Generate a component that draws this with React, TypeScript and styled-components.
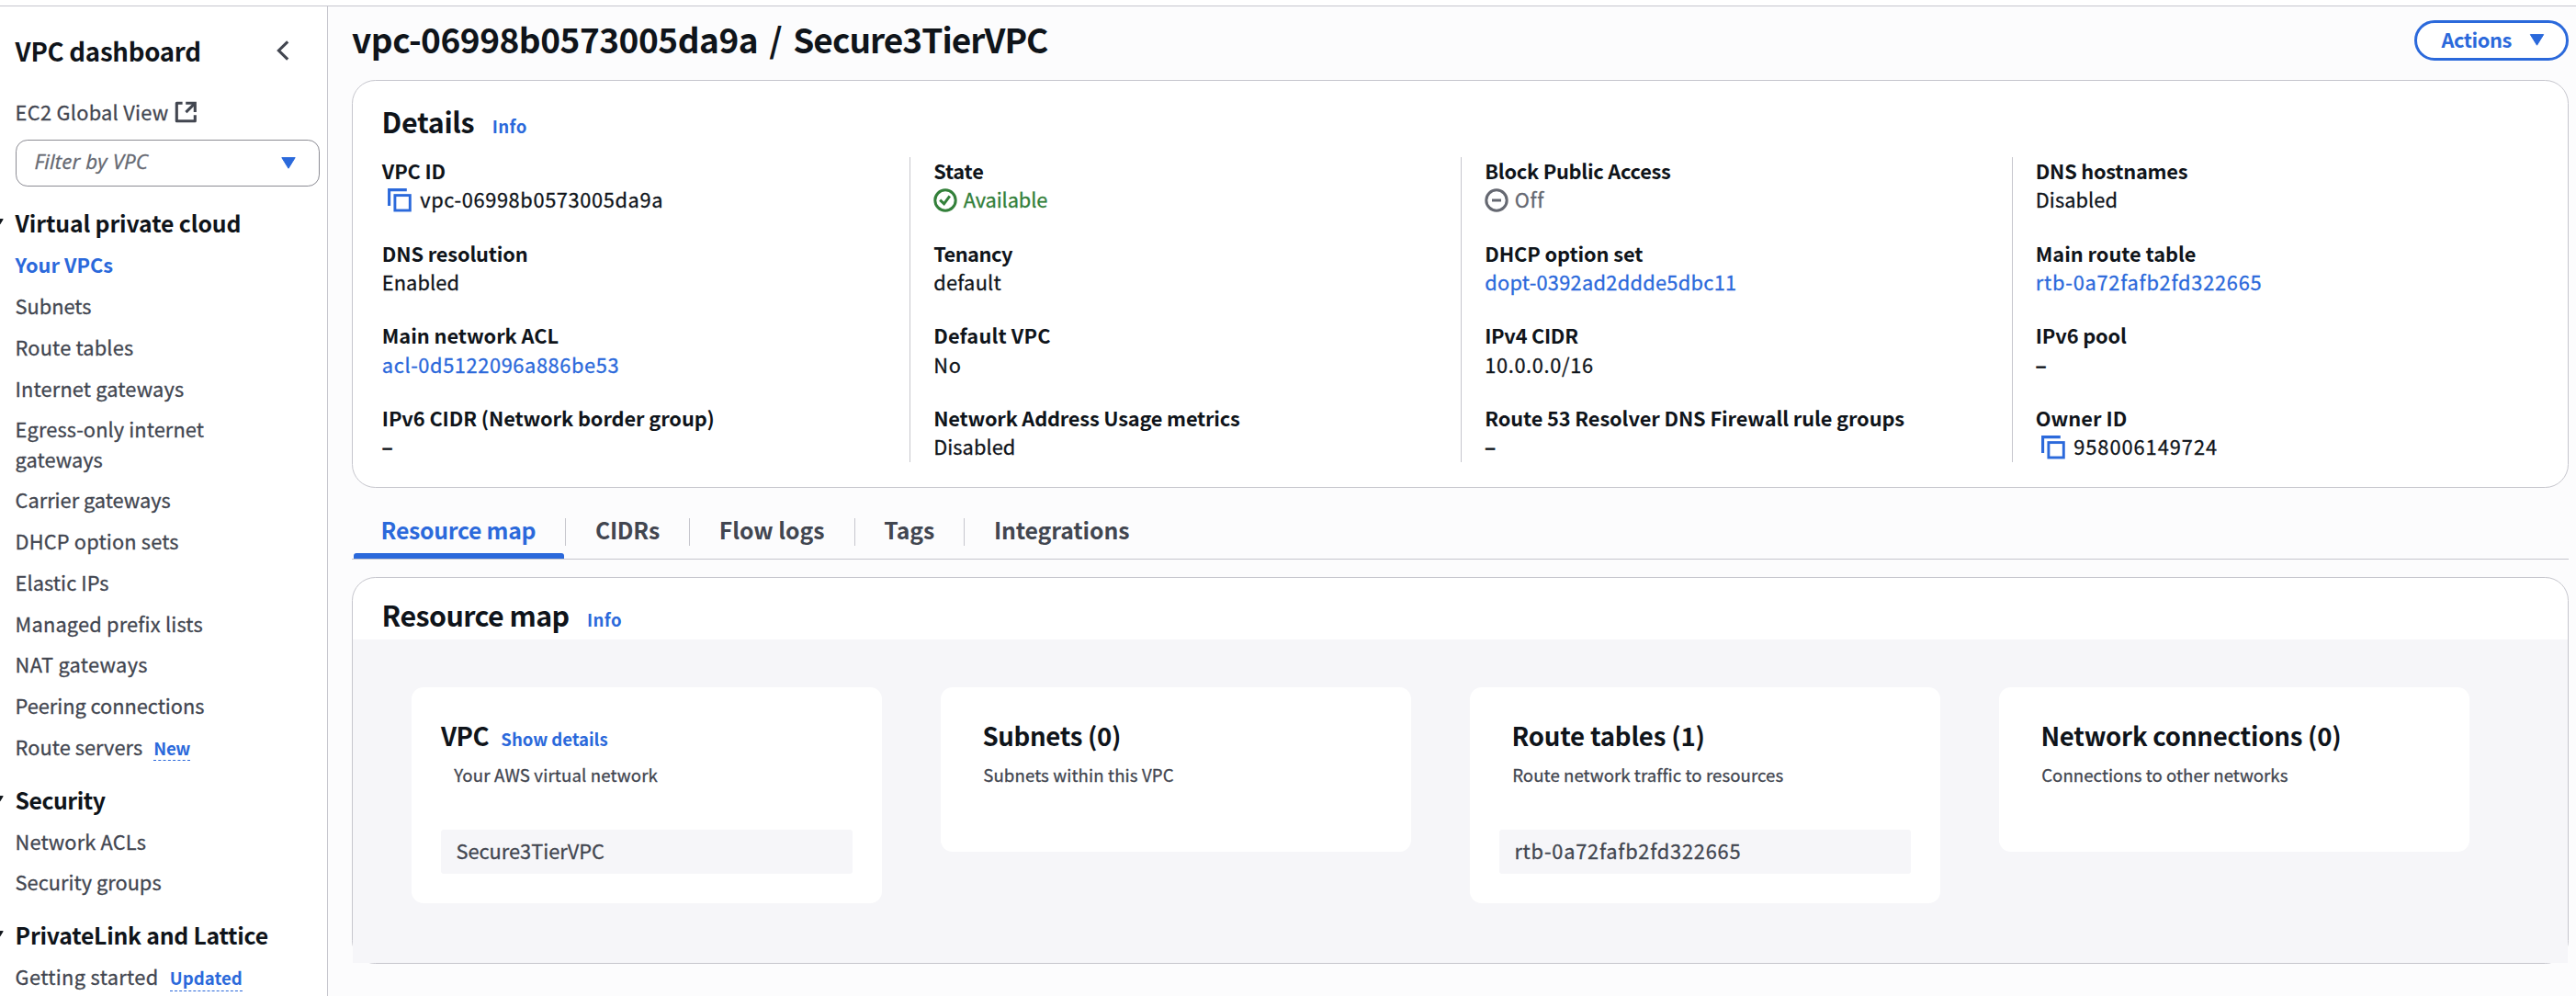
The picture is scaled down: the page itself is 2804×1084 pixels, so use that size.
import React from 'react';
import styled, { createGlobalStyle, css } from 'styled-components';

const color = {
  ink: '#0f141a',
  body: '#424650',
  muted: '#656871',
  link: '#2b69db',
  success: '#33803a',
  line: '#c6c6cd',
  control: '#8c8c94',
  page: '#fcfcfd',
  shade: '#f6f6f9',
};

const GlobalStyle = createGlobalStyle`
  *, *::before, *::after { box-sizing: border-box; }
  body {
    margin: 0;
    background: #fff;
    color: ${color.ink};
    font-family: 'Noto Sans CJK SC', 'Open Sans', sans-serif;
    font-size: 21.8px;
    line-height: 32.2px;
  }
  h1, h2, h3, ul, dl, dt, dd, p { margin: 0; padding: 0; }
  ul { list-style: none; }
  svg { display: block; flex: none; }
`;

type Tracked = { $track?: number };
const tracking = css<Tracked>`
  letter-spacing: ${p => p.$track ?? 0}px;
  white-space: nowrap;
`;
const regular = css`
  font-weight: 400;
  -webkit-text-stroke: 0.3px currentColor;
`;

/* ---------- frame ---------- */

const Page = styled.div`
  display: flex;
  flex-direction: column;
  height: 1084px;
  overflow: hidden;
`;

const TopEdge = styled.div`
  flex: none;
  height: 7px;
  border-bottom: 1px solid ${color.line};
  background: #fff;
`;

const Columns = styled.div`
  display: flex;
  flex: 1;
  min-height: 0;
`;

/* ---------- side navigation ---------- */

const Sidebar = styled.nav`
  flex: none;
  width: 357px;
  padding: 28px 0 0 16.6px;
  border-right: 1px solid ${color.line};
  background: #fff;
  overflow: hidden;
`;

const SidebarHead = styled.div`
  display: flex;
  align-items: center;
  justify-content: space-between;
  height: 40px;
  padding-right: 41.4px;
`;

const SidebarTitle = styled.h2<Tracked>`
  font-size: 27.6px;
  line-height: 40px;
  font-weight: 700;
  ${tracking}
`;

const GlobalLink = styled.a<Tracked>`
  display: flex;
  align-items: center;
  gap: 7px;
  margin-top: 31px;
  color: ${color.body};
  ${regular}
  ${tracking}
`;

const Select = styled.div`
  display: flex;
  align-items: center;
  justify-content: space-between;
  width: 331px;
  height: 51px;
  margin: 13.8px 0 0 0.4px;
  padding: 0 24.5px 0 19.4px;
  border: 1px solid ${color.control};
  border-radius: 12.8px;
`;

const Placeholder = styled.span<Tracked>`
  padding-bottom: 2px;
  color: ${color.muted};
  font-family: 'Open Sans', sans-serif;
  font-size: 22.4px;
  font-style: italic;
  -webkit-text-stroke: 0.3px currentColor;
  ${tracking}
`;

const SectionTitle = styled.h3<Tracked>`
  position: relative;
  margin-top: 21.4px;
  font-size: 24.8px;
  line-height: 36px;
  font-weight: 700;
  ${tracking}
`;

const SectionCaret = styled.span`
  position: absolute;
  left: -28.6px;
  top: 14px;
`;

const NavList = styled.ul`
  display: flex;
  flex-direction: column;
  gap: 12.57px;
  margin: 12px 0 22.5px;
`;

const NavItem = styled.li<Tracked & { $active?: boolean }>`
  color: ${p => (p.$active ? color.link : color.body)};
  ${regular}
  ${tracking}
  ${p => p.$active && 'font-weight: 700; -webkit-text-stroke: 0;'}
`;

const NavLine = styled.span<Tracked>`
  display: block;
  ${tracking}
`;

const Badge = styled.span<Tracked>`
  display: inline-block;
  margin-left: 12.2px;
  border-bottom: 1px dashed ${color.link};
  color: ${color.link};
  font-size: 18.6px;
  line-height: 26.4px;
  font-weight: 700;
  -webkit-text-stroke: 0;
  ${tracking}
`;

/* ---------- main column ---------- */

const Main = styled.main`
  flex: 1;
  min-width: 0;
  padding: 9.8px 8px 0 26px;
  background: ${color.page};
`;

const PageHead = styled.header`
  display: flex;
  align-items: flex-start;
  justify-content: space-between;
  height: 50px;
`;

const PageTitle = styled.h1<Tracked>`
  font-size: 37px;
  line-height: 50px;
  font-weight: 700;
  word-spacing: 4.2px;
  ${tracking}
`;

const VpcName = styled.span<Tracked>`
  ${tracking}
`;

const ActionsButton = styled.button<Tracked>`
  display: flex;
  align-items: center;
  justify-content: space-between;
  width: 168px;
  height: 44px;
  margin-top: 5.2px;
  padding: 0 23px 0 26.5px;
  border: 3px solid ${color.link};
  border-radius: 22px;
  background: #fff;
  color: ${color.link};
  font: 700 21.8px/30px 'Noto Sans CJK SC', 'Open Sans', sans-serif;
  ${tracking}
`;

const ButtonLabel = styled.span`
  padding-bottom: 2.4px;
`;

const Panel = styled.section<{ $top: number; $height: number }>`
  height: ${p => p.$height}px;
  margin-top: ${p => p.$top}px;
  border: 1px solid ${color.line};
  border-radius: 25.6px;
  background: #fff;
`;

const PanelHead = styled.div<{ $pad: string }>`
  display: flex;
  align-items: baseline;
  gap: 19.4px;
  padding: ${p => p.$pad};
`;

const PanelTitle = styled.h2<Tracked>`
  font-size: 30.4px;
  line-height: 40px;
  font-weight: 700;
  ${tracking}
`;

const SmallLink = styled.a<Tracked>`
  color: ${color.link};
  font-size: 18.6px;
  line-height: 26px;
  font-weight: 700;
  ${tracking}
`;

/* ---------- details ---------- */

const DetailGrid = styled.div`
  display: grid;
  grid-template-columns: 574.2px 600px 599.6px 1fr;
  margin: 19.2px 0 0 31.8px;
`;

const DetailColumn = styled.dl`
  display: flex;
  flex-direction: column;
  gap: 27.05px;
  height: 332.4px;
  & + & {
    padding-left: 25.2px;
    border-left: 1px solid ${color.line};
  }
`;

const Label = styled.dt<Tracked>`
  margin-bottom: 0.8px;
  line-height: 29.6px;
  font-weight: 700;
  ${tracking}
`;

type Tone = 'ink' | 'link' | 'success' | 'muted';

const Value = styled.dd<Tracked & { $tone: Tone; $icon?: string }>`
  display: flex;
  align-items: center;
  gap: ${p => (p.$icon === 'copy' ? 9 : 6.6)}px;
  padding-left: ${p => (p.$icon === 'copy' ? 6.4 : 0)}px;
  height: 32.2px;
  color: ${p => color[p.$tone]};
  ${regular}
  ${tracking}
  svg { margin-top: 2px; }
`;

const EmptyValue = styled.span`
  -webkit-text-stroke: 0.9px currentColor;
`;

/* ---------- tabs ---------- */

const Tabs = styled.div`
  display: flex;
  height: 45px;
  margin-top: 33px;
  border-bottom: 1px solid ${color.line};
`;

const Tab = styled.div<{ $active?: boolean }>`
  display: flex;
  flex-direction: column;
  justify-content: space-between;
  color: ${p => (p.$active ? color.link : color.body)};
  &::after {
    content: '';
    height: 6px;
    margin: 0 2px;
    border-radius: 3px 3px 0 0;
    background: ${p => (p.$active ? color.link : 'transparent')};
  }
`;

const TabLabel = styled.span<Tracked & { $last: boolean }>`
  height: 30px;
  padding: 0 32.1px 0 31.6px;
  border-right: 1px solid ${p => (p.$last ? 'transparent' : color.line)};
  font-size: 24.8px;
  line-height: 25.6px;
  font-weight: 700;
  ${tracking}
`;

/* ---------- resource map ---------- */

const MapArea = styled.div`
  display: flex;
  align-items: flex-start;
  gap: 64px;
  height: 352px;
  padding: 52px 64px 0;
  background: ${color.shade};
`;

const MapCard = styled.article`
  flex: none;
  width: 512px;
  padding: 34px 32px 32px;
  border-radius: 12.8px;
  background: #fff;
`;

const MapCardHead = styled.div<{ $inset: number }>`
  display: flex;
  align-items: baseline;
  gap: 13.4px;
  height: 36px;
  padding-left: ${p => p.$inset}px;
`;

const MapCardTitle = styled.h3<Tracked>`
  font-size: 27.6px;
  line-height: 36px;
  font-weight: 700;
  ${tracking}
`;

const MapCardNote = styled.p<Tracked>`
  margin: 12.4px 0 38.8px;
  padding-left: 14.2px;
  color: ${color.body};
  font-size: 18.6px;
  line-height: 26px;
  ${regular}
  ${tracking}
`;

const Resource = styled.div<Tracked>`
  height: 48px;
  margin-top: 46.8px;
  padding-left: 16.4px;
  border-radius: 3px;
  background: ${color.shade};
  color: ${color.body};
  line-height: 46px;
  ${regular}
  ${tracking}
`;

/* ---------- icons ---------- */

const CaretDown = ({ fill, w = 16, h = 13 }: { fill: string; w?: number; h?: number }) => (
  <svg width={w} height={h} viewBox="0 0 16 13">
    <path d="M0.8 0.6H15.2L8 12.2Z" fill={fill} stroke={fill} strokeWidth="1" strokeLinejoin="round" />
  </svg>
);

const ChevronLeft = () => (
  <svg width="14" height="22" viewBox="0 0 14 22">
    <path d="M12.2 1.4L2.4 11L12.2 20.6" fill="none" stroke={color.body} strokeWidth="3.1" />
  </svg>
);

const ExternalIcon = () => (
  <svg width="24" height="24" viewBox="0 0 24 24">
    <g fill="none" stroke={color.body} strokeWidth="3.1" strokeLinejoin="round">
      <path d="M8.6 2.3H2.3V21.7H22.3V15.2" />
      <path d="M12.2 2.3H22.3V12" strokeLinejoin="miter" />
      <path d="M22 2.6L12.4 12.2" />
    </g>
  </svg>
);

const CopyIcon = () => (
  <svg width="26" height="26" viewBox="0 0 26 26">
    <g fill="none" stroke={color.link}>
      <path d="M1.6 19V1.6H20.8" strokeWidth="3.1" />
      <rect x="7.9" y="7.6" width="16.4" height="16.4" strokeWidth="2.9" />
    </g>
  </svg>
);

const CheckCircle = () => (
  <svg width="26" height="26" viewBox="0 0 26 26">
    <g fill="none" stroke={color.success} strokeWidth="3">
      <circle cx="13" cy="13" r="11.2" />
      <path d="M7.2 12.6L11.6 16.8L17.8 8.4" />
    </g>
  </svg>
);

const MinusCircle = () => (
  <svg width="26" height="26" viewBox="0 0 26 26">
    <g fill="none" stroke={color.muted} strokeWidth="3">
      <circle cx="13" cy="13" r="11.2" />
      <path d="M8 13H18" />
    </g>
  </svg>
);

const icons = { copy: CopyIcon, check: CheckCircle, minus: MinusCircle };

/* ---------- data ---------- */

type NavEntry = { lines: [string, number][]; active?: boolean; badge?: [string, number] };
const sections: { title: string; track: number; items: NavEntry[] }[] = [
  {
    title: 'Virtual private cloud',
    track: -0.13,
    items: [
      { lines: [['Your VPCs', 0]], active: true },
      { lines: [['Subnets', -0.02]] },
      { lines: [['Route tables', 0.16]] },
      { lines: [['Internet gateways', 0.14]] },
      { lines: [['Egress-only internet', 0.09], ['gateways', 0.03]] },
      { lines: [['Carrier gateways', -0.02]] },
      { lines: [['DHCP option sets', 0.16]] },
      { lines: [['Elastic IPs', 0.05]] },
      { lines: [['Managed prefix lists', 0.18]] },
      { lines: [['NAT gateways', 0.3]] },
      { lines: [['Peering connections', -0.04]] },
      { lines: [['Route servers', 0.03]], badge: ['New', -0.33] },
    ],
  },
  {
    title: 'Security',
    track: -0.5,
    items: [{ lines: [['Network ACLs', 0.14]] }, { lines: [['Security groups', 0]] }],
  },
  {
    title: 'PrivateLink and Lattice',
    track: -0.24,
    items: [{ lines: [['Getting started', 0.34]], badge: ['Updated', 0.05] }],
  },
];

type Field = {
  label: string;
  lt: number;
  value: string;
  vt: number;
  tone?: Tone;
  icon?: keyof typeof icons;
};
const details: Field[][] = [
  [
    { label: 'VPC ID', lt: -0.13, value: 'vpc-06998b0573005da9a', vt: 0.62, icon: 'copy' },
    { label: 'DNS resolution', lt: -0.15, value: 'Enabled', vt: 0.08 },
    { label: 'Main network ACL', lt: -0.05, value: 'acl-0d5122096a886be53', vt: 0.6, tone: 'link' },
    { label: 'IPv6 CIDR (Network border group)', lt: -0.1, value: '–', vt: 0 },
  ],
  [
    { label: 'State', lt: -0.21, value: 'Available', vt: -0.1, tone: 'success', icon: 'check' },
    { label: 'Tenancy', lt: -0.5, value: 'default', vt: 0.25 },
    { label: 'Default VPC', lt: 0.15, value: 'No', vt: 0.84 },
    { label: 'Network Address Usage metrics', lt: -0.2, value: 'Disabled', vt: 0.07 },
  ],
  [
    { label: 'Block Public Access', lt: -0.25, value: 'Off', vt: 0.6, tone: 'muted', icon: 'minus' },
    { label: 'DHCP option set', lt: -0.1, value: 'dopt-0392ad2ddde5dbc11', vt: 0.27, tone: 'link' },
    { label: 'IPv4 CIDR', lt: -0.27, value: '10.0.0.0/16', vt: 0.65 },
    { label: 'Route 53 Resolver DNS Firewall rule groups', lt: -0.11, value: '–', vt: 0 },
  ],
  [
    { label: 'DNS hostnames', lt: -0.25, value: 'Disabled', vt: 0.07 },
    { label: 'Main route table', lt: -0.04, value: 'rtb-0a72fafb2fd322665', vt: 0.75, tone: 'link' },
    { label: 'IPv6 pool', lt: -0.14, value: '–', vt: 0 },
    { label: 'Owner ID', lt: 0, value: '958006149724', vt: 0.98, icon: 'copy' },
  ],
];

const tabs: [string, number][] = [
  ['Resource map', -0.28],
  ['CIDRs', -0.27],
  ['Flow logs', -0.02],
  ['Tags', -0.1],
  ['Integrations', -0.12],
];

type MapEntry = {
  title: string;
  tt: number;
  note: string;
  nt: number;
  link?: boolean;
  resource?: [string, number];
};
const mapCards: MapEntry[] = [
  { title: 'VPC', tt: -0.54, note: 'Your AWS virtual network', nt: 0.16, link: true, resource: ['Secure3TierVPC', 0] },
  { title: 'Subnets (0)', tt: -0.32, note: 'Subnets within this VPC', nt: 0.13 },
  { title: 'Route tables (1)', tt: -0.2, note: 'Route network traffic to resources', nt: 0.08, resource: ['rtb-0a72fafb2fd322665', 0.76] },
  { title: 'Network connections (0)', tt: -0.23, note: 'Connections to other networks', nt: 0.05 },
];

/* ---------- view ---------- */

function SideNav() {
  return (
    <Sidebar>
      <SidebarHead>
        <SidebarTitle $track={-0.27}>VPC dashboard</SidebarTitle>
        <ChevronLeft />
      </SidebarHead>
      <GlobalLink $track={0.27}>
        EC2 Global View
        <ExternalIcon />
      </GlobalLink>
      <Select>
        <Placeholder $track={0.1}>Filter by VPC</Placeholder>
        <CaretDown fill={color.link} />
      </Select>
      {sections.map(section => (
        <React.Fragment key={section.title}>
          <SectionTitle $track={section.track}>
            <SectionCaret>
              <CaretDown fill={color.ink} />
            </SectionCaret>
            {section.title}
          </SectionTitle>
          <NavList>
            {section.items.map(item => (
              <NavItem key={item.lines[0][0]} $active={item.active} $track={item.lines[0][1]}>
                {item.lines.length === 1
                  ? item.lines[0][0]
                  : item.lines.map(([text, track]) => (
                      <NavLine key={text} $track={track}>
                        {text}
                      </NavLine>
                    ))}
                {item.badge && <Badge $track={item.badge[1]}>{item.badge[0]}</Badge>}
              </NavItem>
            ))}
          </NavList>
        </React.Fragment>
      ))}
    </Sidebar>
  );
}

function DetailField({ field }: { field: Field }) {
  const Icon = field.icon ? icons[field.icon] : null;
  return (
    <div>
      <Label $track={field.lt}>{field.label}</Label>
      <Value $track={field.vt} $tone={field.tone ?? 'ink'} $icon={field.icon}>
        {Icon && <Icon />}
        {field.value === '–' ? <EmptyValue>–</EmptyValue> : <span>{field.value}</span>}
      </Value>
    </div>
  );
}

export default function App() {
  return (
    <Page>
      <GlobalStyle />
      <TopEdge />
      <Columns>
        <SideNav />
        <Main>
          <PageHead>
            <PageTitle $track={-0.48}>
              vpc-06998b0573005da9a / <VpcName $track={-0.95}>Secure3TierVPC</VpcName>
            </PageTitle>
            <ActionsButton $track={-0.44}>
              <ButtonLabel>Actions</ButtonLabel>
              <CaretDown fill={color.link} w={17} />
            </ActionsButton>
          </PageHead>

          <Panel $top={20.2} $height={444}>
            <PanelHead $pad="23.8px 32px 0 31.6px">
              <PanelTitle $track={-0.31}>Details</PanelTitle>
              <SmallLink $track={0.42}>Info</SmallLink>
            </PanelHead>
            <DetailGrid>
              {details.map(column => (
                <DetailColumn key={column[0].label}>
                  {column.map(field => (
                    <DetailField key={field.label} field={field} />
                  ))}
                </DetailColumn>
              ))}
            </DetailGrid>
          </Panel>

          <Tabs>
            {tabs.map(([name, track], i) => (
              <Tab key={name} $active={i === 0}>
                <TabLabel $track={track} $last={i === tabs.length - 1}>
                  {name}
                </TabLabel>
              </Tab>
            ))}
          </Tabs>

          <Panel $top={19} $height={421}>
            <PanelHead $pad="20.5px 32px 6.5px 31.6px">
              <PanelTitle $track={-0.57}>Resource map</PanelTitle>
              <SmallLink $track={0.42}>Info</SmallLink>
            </PanelHead>
            <MapArea>
              {mapCards.map(card => (
                <MapCard key={card.title}>
                  <MapCardHead $inset={card.link ? 0 : 13.4}>
                    <MapCardTitle $track={card.tt}>{card.title}</MapCardTitle>
                    {card.link && <SmallLink $track={-0.06}>Show details</SmallLink>}
                  </MapCardHead>
                  <MapCardNote $track={card.nt}>{card.note}</MapCardNote>
                  {card.resource && <Resource $track={card.resource[1]}>{card.resource[0]}</Resource>}
                </MapCard>
              ))}
            </MapArea>
          </Panel>
        </Main>
      </Columns>
    </Page>
  );
}
